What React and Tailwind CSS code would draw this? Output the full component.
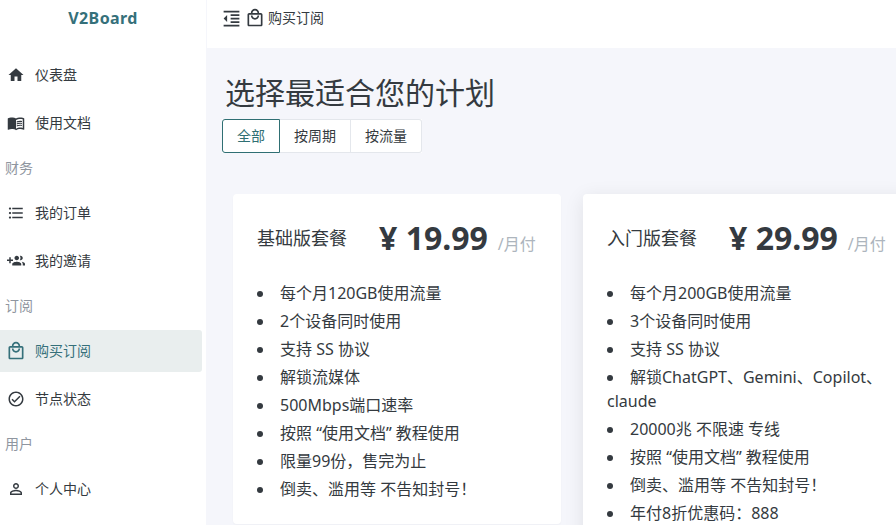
import React from "react";
import {
  MdHome,
  MdMenuBook,
  MdFormatListBulleted,
  MdOutlineLocalMall,
  MdOutlineCheckCircle,
  MdPersonOutline,
  MdFormatIndentDecrease,
} from "react-icons/md";

// old material group_add, plus sign sits on the left
const GroupAdd = ({ className }) => (
  <svg viewBox="0 0 24 24" fill="currentColor" className={className}>
    <path d="M8 10H5V7H3v3H0v2h3v3h2v-3h3v-2zm10 1c1.66 0 2.99-1.34 2.99-3S19.66 5 18 5c-.32 0-.63.05-.91.14.57.81.9 1.79.9 2.86s-.34 2.04-.9 2.86c.28.09.59.14.91.14zm-5 0c1.66 0 3-1.34 3-3s-1.34-3-3-3-3 1.34-3 3 1.34 3 3 3zm6.62 2.16c.83.73 1.38 1.66 1.38 2.84v2h3v-2c0-1.54-2.37-2.49-4.38-2.84zM13 13c-2 0-6 1-6 3v2h12v-2c0-2-4-3-6-3z" />
  </svg>
);

const nav = [
  { label: "仪表盘", icon: MdHome },
  { label: "使用文档", icon: MdMenuBook },
  { heading: "财务" },
  { label: "我的订单", icon: MdFormatListBulleted },
  { label: "我的邀请", icon: GroupAdd },
  { heading: "订阅" },
  { label: "购买订阅", icon: MdOutlineLocalMall, active: true },
  { label: "节点状态", icon: MdOutlineCheckCircle },
  { heading: "用户" },
  { label: "个人中心", icon: MdPersonOutline },
];

const plans = [
  {
    name: "基础版套餐",
    price: "19.99",
    features: [
      "每个月120GB使用流量",
      "2个设备同时使用",
      "支持 SS 协议",
      "解锁流媒体",
      "500Mbps端口速率",
      "按照 “使用文档” 教程使用",
      "限量99份，售完为止",
      "倒卖、滥用等 不告知封号！",
    ],
  },
  {
    name: "入门版套餐",
    price: "29.99",
    hover: true,
    features: [
      "每个月200GB使用流量",
      "3个设备同时使用",
      "支持 SS 协议",
      "解锁ChatGPT、Gemini、Copilot、claude",
      "20000兆 不限速 专线",
      "按照 “使用文档” 教程使用",
      "倒卖、滥用等 不告知封号！",
      "年付8折优惠码：888",
    ],
  },
];

const PlanCard = ({ plan }) => (
  <div
    className={`w-[328px] shrink-0 bg-white rounded-sm px-6 pt-6 pb-[19px] ${
      plan.hover ? "shadow-[0_4px_20px_rgba(0,0,0,0.09)]" : "shadow-[0_1px_2px_rgba(0,0,0,0.03)]"
    }`}
  >
    <div className="flex items-center h-[40px] whitespace-nowrap">
      <span className="text-lg text-[#343a40] w-[122px]">{plan.name}</span>
      <span className="text-[32px] leading-[40px] font-bold text-[#343a40]">¥ {plan.price}</span>
      <span className="ml-[10px] self-end mb-[2px] text-base text-[#adb5bd]">/月付</span>
    </div>
    <ul className="list-disc list-inside mt-[23px] text-base leading-6 text-[#343a40]">
      {plan.features.map((f) => (
        <li key={f} className="mb-1">
          {f}
        </li>
      ))}
    </ul>
  </div>
);

export default function App() {
  return (
    <div className="flex w-[896px] h-[525px] overflow-hidden bg-[#f5f6fb] font-['Noto_Sans','Noto_Sans_CJK_SC',sans-serif] text-[14px] text-[#343a40]">
      <aside className="w-[207px] shrink-0 bg-white border-r border-[#f5f6fb]">
        <div className="h-[48px] pb-[12px] flex items-center justify-center text-base font-bold text-[#35707a] tracking-wide">
          V2Board
        </div>
        <nav className="flex flex-col pt-[3px] pr-[4px]">
          {nav.map((item) =>
            item.heading ? (
              <div
                key={item.heading}
                className="h-[42px] pb-[2px] flex items-center pl-[5px] text-[#8f96a0]"
              >
                {item.heading}
              </div>
            ) : (
              <div
                key={item.label}
                className={`h-[42px] my-[3px] flex items-center rounded-r-[3px] ${
                  item.active ? "bg-[#e9eeee] text-[#35707a]" : ""
                }`}
              >
                <span className="w-[35px] pr-[3px] flex justify-center">
                  <item.icon className={item.active ? "w-[20px] h-[20px]" : "w-[18px] h-[18px]"} />
                </span>
                <span className="pb-[2px]">{item.label}</span>
              </div>
            )
          )}
        </nav>
      </aside>
      <div className="flex-1 min-w-0">
        <header className="h-[48px] pb-[12px] bg-white flex items-center pl-[14px] text-[14px]">
          <MdFormatIndentDecrease className="w-[21px] h-[21px] mr-[3px]" />
          <MdOutlineLocalMall className="w-[20px] h-[20px] mr-[3px]" />
          <span className="pb-[2px]">购买订阅</span>
        </header>
        <main className="pl-[15px]">
          <h1 className="pl-[3px] pt-[24px] text-[30px] leading-[42px] text-[#343a40]">
            选择最适合您的计划
          </h1>
          <div className="flex h-[34px] w-fit mt-[5px] pb-0 bg-white text-[#343a40]">
            <div className="w-[58px] pb-[2px] flex items-center justify-center border border-[#2f6f73] rounded-l-[3px] text-[#2f6f73]">
              全部
            </div>
            <div className="w-[71px] pb-[2px] flex items-center justify-center border-y border-r border-[#e4e7ec]">
              按周期
            </div>
            <div className="w-[71px] pb-[2px] flex items-center justify-center border-y border-r border-[#e4e7ec] rounded-r-[3px]">
              按流量
            </div>
          </div>
          <div className="flex items-start gap-[22px] pl-[11px] mt-[41px]">
            {plans.map((plan) => (
              <PlanCard key={plan.name} plan={plan} />
            ))}
          </div>
        </main>
      </div>
    </div>
  );
}
